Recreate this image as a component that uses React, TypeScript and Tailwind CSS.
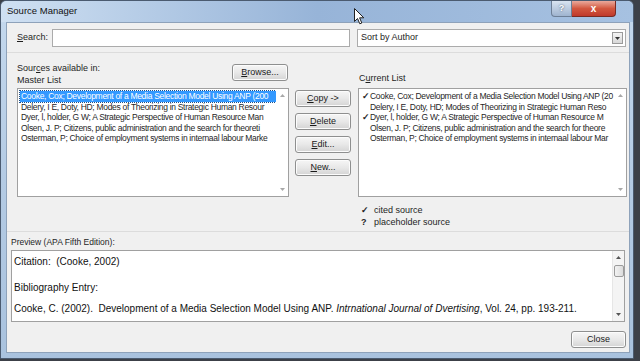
import React from "react";

const masterItems = [
  "Cooke, Cox; Development of a Media Selection Model Using ANP (200",
  "Delery, I E, Doty, HD; Modes of Theorizing in Strategic Human Resour",
  "Dyer, l, holder, G W; A Strategic Perspective of Human Resource Man",
  "Olsen, J. P; Citizens, public administration and the search for theoreti",
  "Osterman, P; Choice of employment systems in internaal labour Marke",
];

const currentItems = [
  { text: "Cooke, Cox; Development of a Media Selection Model Using ANP (20", cited: true },
  { text: "Delery, I E, Doty, HD; Modes of Theorizing in Strategic Human Reso", cited: false },
  { text: "Dyer, l, holder, G W; A Strategic Perspective of Human Resource M", cited: true },
  { text: "Olsen, J. P; Citizens, public administration and the search for theore", cited: false },
  { text: "Osterman, P; Choice of employment systems in internaal labour Mar", cited: false },
];

const font = { fontFamily: '"Liberation Sans", Arial, sans-serif' };

const WinButton = ({ label, u, w = "w-[56px]" }: { label: string; u?: number; w?: string }) => (
  <button
    className={`${w} h-[17px] rounded-[3px] border border-[#8e8f8f] bg-gradient-to-b from-[#f6f6f6] via-[#e8e8e8] to-[#d4d4d4] text-[9px] text-[#1a1a1a] leading-[15px] shadow-[inset_0_0_0_1px_#fcfcfc]`}
  >
    {u === undefined ? (
      label
    ) : (
      <>
        <span className="underline">{label[u]}</span>
        {label.slice(u + 1)}
      </>
    )}
  </button>
);

const MiniArrow = ({ up }: { up?: boolean }) => (
  <svg width="5" height="3" viewBox="0 0 5 3">
    <path d={up ? "M0 3 L2.5 0 L5 3 Z" : "M0 0 L2.5 3 L5 0 Z"} fill="#a8a8a8" />
  </svg>
);

const ListBox = ({ children }: { children: React.ReactNode }) => (
  <div className="h-[109px] border border-[#a0a0a0] bg-white flex">
    <div className="flex-1 min-w-0 pt-[2px] pl-[2px] overflow-hidden">{children}</div>
    <div className="w-[12px] flex flex-col items-center justify-between py-[5px]">
      <MiniArrow up />
      <MiniArrow />
    </div>
  </div>
);

export default function App() {
  return (
    <div className="w-[640px] h-[361px] bg-[#3c4048] overflow-hidden" style={font}>
      <div className="relative w-[634px] h-[359px] rounded-t-[6px] border border-[#4b5b70] bg-gradient-to-b from-[#c5d9ee] via-[#b4cbe4] to-[#a9c2de] flex flex-col">
        {/* title bar */}
        <div className="h-[21px] flex items-center px-[6px] bg-gradient-to-r from-[#cfe0f2] via-[#97b4d8] to-[#a6c1e1] rounded-t-[6px]">
          <span className="text-[9.5px] text-[#111]">Source Manager</span>
          <div className="ml-auto self-start flex mr-[11px]">
            <div className="w-[21px] h-[16px] rounded-bl-[4px] border border-[#6d7f96] border-t-0 bg-gradient-to-b from-[#d9e4f1] to-[#9fb4cf] flex items-center justify-center text-[9px] font-bold text-white [text-shadow:0_0_2px_#3a4a60]">
              ?
            </div>
            <div className="w-[44px] h-[16px] rounded-br-[4px] border border-[#7a2a22] border-t-0 border-l-0 bg-gradient-to-b from-[#e9a99c] via-[#d2573f] to-[#c0392b] flex items-center justify-center text-[10px] font-bold text-white">
              x
            </div>
          </div>
        </div>

        {/* dialog body */}
        <div className="ml-[5px] mr-[3px] h-[331px] bg-[#f0f0f0] border border-[#8ea2ba] flex flex-col text-[9px] text-[#1e1e1e]">
          {/* search row */}
          <div className="mt-[6px] h-[18px] flex items-center pl-[10px]">
            <span className="w-[35px]">
              <span className="underline">S</span>earch:
            </span>
            <div className="w-[298px] h-[18px] border border-[#ababab] bg-white" />
            <div className="ml-[7px] w-[269px] h-[18px] border border-[#ababab] bg-white flex items-center pl-[3px]">
              <span>Sort by Author</span>
              <div className="ml-auto mr-[2px] w-[11px] h-[12px] border border-[#9a9a9a] bg-gradient-to-b from-[#f4f4f4] to-[#d8d8d8] flex items-center justify-center">
                <svg width="5" height="3" viewBox="0 0 5 3">
                  <path d="M0 0 L2.5 3 L5 0 Z" fill="#333" />
                </svg>
              </div>
            </div>
          </div>
          <div className="mt-[5px] border-t border-[#dcdcdc]" />

          {/* lists */}
          <div className="mt-[9px] h-[169px] flex items-start">
            <div className="ml-[10px] w-[272px] flex flex-col">
              <div className="h-[26px] flex items-start">
                <div className="leading-[12px]">
                  <div>
                    Sour<span className="underline">c</span>es available in:
                  </div>
                  <div>Master List</div>
                </div>
                <div className="ml-auto mt-[2px] mr-[1px]">
                  <WinButton label="Browse..." u={0} />
                </div>
              </div>
              <ListBox>
                {masterItems.map((t, i) => (
                  <div
                    key={i}
                    className={`h-[10.5px] leading-[10.5px] whitespace-nowrap overflow-hidden text-[8.5px] tracking-[-0.3px] pl-[1px] text-[#262626] ${
                      i === 0 ? "bg-[#3399ff] text-white outline-1 outline-dotted outline-[#1a4f8a]" : ""
                    }`}
                  >
                    {t}
                  </div>
                ))}
              </ListBox>
            </div>

            <div className="ml-[6px] pt-[28px] flex flex-col gap-[6px]">
              <WinButton label="Copy ->" u={0} />
              <WinButton label="Delete" u={0} />
              <WinButton label="Edit..." u={0} />
              <WinButton label="New..." u={0} />
            </div>

            <div className="ml-[7px] w-[269px] flex flex-col">
              <div className="h-[26px] flex items-end pb-[3px] pl-[1px]">
                <span>
                  C<span className="underline">u</span>rrent List
                </span>
              </div>
              <ListBox>
                {currentItems.map((it, i) => (
                  <div
                    key={i}
                    className="h-[10.5px] leading-[10.5px] whitespace-nowrap overflow-hidden text-[8.5px] tracking-[-0.3px] text-[#262626] flex"
                  >
                    <span className="w-[9px] shrink-0 text-center font-bold">{it.cited ? "✓" : ""}</span>
                    <span>{it.text}</span>
                  </div>
                ))}
              </ListBox>
              <div className="mt-[7px] flex flex-col leading-[12px] pl-[3px]">
                <div className="flex">
                  <span className="w-[13px] font-bold">✓</span>
                  <span>cited source</span>
                </div>
                <div className="flex">
                  <span className="w-[13px] font-bold">?</span>
                  <span>placeholder source</span>
                </div>
              </div>
            </div>
          </div>

          <div className="border-t border-[#dcdcdc]" />

          {/* preview */}
          <div className="mt-[4px] pl-[4px] text-[8.5px] leading-[12px]">Preview (APA Fifth Edition):</div>
          <div className="mt-[2px] ml-[4px] mr-[4px] h-[72px] border border-[#a0a0a0] bg-white flex">
            <div className="flex-1 pl-[2px] pt-[4px] text-[10px] text-[#111]">
              <div className="h-[13px] leading-[13px]">Citation:&nbsp; (Cooke, 2002)</div>
              <div className="h-[13px]" />
              <div className="h-[13px] leading-[13px]">Bibliography Entry:</div>
              <div className="h-[13px] leading-[13px] mt-[8px] whitespace-nowrap">
                Cooke, C. (2002).&nbsp; Development of a Media Selection Model Using ANP.{" "}
                <i>Intrnational Journal of Dvertising</i>, Vol. 24, pp. 193-211.
              </div>
            </div>
            <div className="w-[12px] bg-[#f4f4f4] border-l border-[#e6e6e6] flex flex-col items-center py-[5px]">
              <svg width="5" height="3" viewBox="0 0 5 3">
                <path d="M0 3 L2.5 0 L5 3 Z" fill="#555" />
              </svg>
              <div className="mt-[6px] w-[10px] h-[12px] rounded-[2px] border border-[#9b9b9b] bg-gradient-to-r from-[#f2f2f2] to-[#dcdcdc]" />
              <div className="mt-auto">
                <svg width="5" height="3" viewBox="0 0 5 3">
                  <path d="M0 0 L2.5 3 L5 0 Z" fill="#555" />
                </svg>
              </div>
            </div>
          </div>

          <div className="mt-[9px] flex justify-end pr-[3px]">
            <WinButton label="Close" w="w-[55px]" />
          </div>
        </div>

        {/* mouse cursor */}
        <svg className="absolute left-[353px] top-[7px]" width="11" height="17" viewBox="0 0 11 17">
          <path d="M0.5 0.5 L0.5 13.5 L3.5 10.5 L5.8 15.8 L7.8 15 L5.6 9.8 L9.8 9.8 Z" fill="#fff" stroke="#222" strokeWidth="1" />
        </svg>
      </div>
    </div>
  );
}
